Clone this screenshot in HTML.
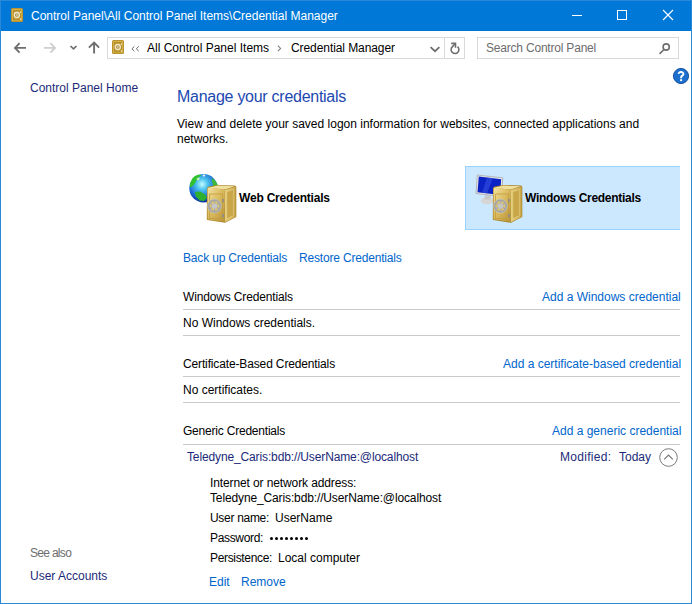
<!DOCTYPE html>
<html><head><meta charset="utf-8">
<style>
*{margin:0;padding:0;box-sizing:border-box}
html,body{width:692px;height:604px;overflow:hidden;background:#fff}
body{position:relative;font-family:"Liberation Sans",sans-serif;font-size:12px;color:#000}
.t{position:absolute;white-space:nowrap;line-height:15px}
.lnk{color:#0066cc}
.nav{color:#1b2a78}
svg{position:absolute;overflow:visible}
</style></head><body>
<!-- window border -->
<!-- title bar -->
<div style="position:absolute;left:0;top:0;width:692px;height:31px;background:#0078d7"></div>
<svg style="left:11px;top:8px" width="12" height="14" viewBox="0 0 12 14">
  <rect x="0" y="0" width="12" height="14" rx="1.5" fill="#b08a28"/>
  <rect x="0.8" y="0.8" width="10.4" height="12.4" rx="0.8" fill="#d6b246"/>
  <rect x="2.4" y="2.3" width="7.4" height="9.7" fill="#c29b33" stroke="#a8832a" stroke-width="0.6"/>
  <circle cx="5.8" cy="7" r="2.5" fill="#b39136" stroke="#efe8cf" stroke-width="1.3"/>
  <rect x="5.1" y="6.3" width="1.4" height="1.4" fill="#dddddd"/>
  <rect x="9.1" y="3.4" width="1" height="1.5" fill="#f2ecd8"/>
  <rect x="9.1" y="10.3" width="1" height="1.5" fill="#f2ecd8"/>
</svg>
<div class="t" style="left:31px;top:9px;color:#fff">Control Panel\All Control Panel Items\Credential Manager</div>
<!-- window controls -->
<div style="position:absolute;left:572px;top:15px;width:10px;height:1px;background:#fff"></div>
<div style="position:absolute;left:617px;top:10px;width:10px;height:10px;border:1px solid #fff"></div>
<svg style="left:663px;top:10px" width="10" height="10" viewBox="0 0 10 10"><path d="M0 0L10 10M10 0L0 10" stroke="#fff" stroke-width="1.1"/></svg>

<!-- nav buttons -->
<svg style="left:14px;top:42px" width="13" height="12" viewBox="0 0 13 12"><path d="M5.6 1.2L1 5.9L5.6 10.6M1 5.9H12" fill="none" stroke="#6e6e6e" stroke-width="1.9"/></svg>
<svg style="left:44px;top:42px" width="13" height="12" viewBox="0 0 13 12"><path d="M6.4 1.2L11 5.9L6.4 10.6M11 5.9H0" fill="none" stroke="#cfcfcf" stroke-width="1.9"/></svg>
<svg style="left:70px;top:45px" width="7" height="5" viewBox="0 0 7 5"><path d="M0.5 1L3.5 3.9L6.5 1" fill="none" stroke="#6e6e6e" stroke-width="1.7"/></svg>
<svg style="left:88px;top:41px" width="12" height="13" viewBox="0 0 12 13"><path d="M0.9 6.6L6.1 1.5L11.1 6.6M6.1 1.5V12.6" fill="none" stroke="#6e6e6e" stroke-width="1.9"/></svg>

<!-- address box -->
<div style="position:absolute;left:107px;top:37px;width:358px;height:22px;border:1px solid #d9d9d9"></div>
<div style="position:absolute;left:444px;top:38px;width:1px;height:20px;background:#d9d9d9"></div>
<svg style="left:112px;top:40px" width="12" height="14" viewBox="0 0 12 14">
  <rect x="0" y="0" width="12" height="14" rx="1.5" fill="#b08a28"/>
  <rect x="0.8" y="0.8" width="10.4" height="12.4" rx="0.8" fill="#d6b246"/>
  <rect x="2.4" y="2.3" width="7.4" height="9.7" fill="#c29b33" stroke="#a8832a" stroke-width="0.6"/>
  <circle cx="5.8" cy="7" r="2.5" fill="#b39136" stroke="#efe8cf" stroke-width="1.3"/>
  <rect x="5.1" y="6.3" width="1.4" height="1.4" fill="#dddddd"/>
  <rect x="9.1" y="3.4" width="1" height="1.5" fill="#f2ecd8"/>
  <rect x="9.1" y="10.3" width="1" height="1.5" fill="#f2ecd8"/>
</svg>
<svg style="left:131px;top:46px" width="9" height="6" viewBox="0 0 9 6"><path d="M3.4 0.4L0.9 2.8L3.4 5.2M7.8 0.4L5.3 2.8L7.8 5.2" fill="none" stroke="#666" stroke-width="1"/></svg>
<div class="t" style="left:147px;top:41px">All Control Panel Items</div>
<svg style="left:277px;top:45px" width="5" height="7" viewBox="0 0 5 7"><path d="M0.9 0.7L3.6 3.4L0.9 6.1" fill="none" stroke="#808080" stroke-width="1.1"/></svg>
<div class="t" style="left:291px;top:41px;letter-spacing:-0.08px">Credential Manager</div>
<svg style="left:430px;top:46px" width="10" height="6" viewBox="0 0 10 6"><path d="M0.6 1.2L5 5.2L9.4 1.2" fill="none" stroke="#6e6e6e" stroke-width="1.8"/></svg>
<svg style="left:448px;top:42px" width="14" height="14" viewBox="0 0 14 14"><path d="M9.5 4.6A3.9 3.9 0 1 1 4.24 4.84L7.2 1.8" fill="none" stroke="#6e6e6e" stroke-width="1.55"/><path d="M3.2 1.4H7.5V5.7" fill="none" stroke="#6e6e6e" stroke-width="1.6"/></svg>

<!-- search box -->
<div style="position:absolute;left:477px;top:37px;width:202px;height:22px;border:1px solid #d9d9d9"></div>
<div class="t" style="left:486px;top:41px;color:#6d6d6d;letter-spacing:-0.2px">Search Control Panel</div>
<svg style="left:659px;top:43px" width="12" height="12" viewBox="0 0 12 12"><circle cx="7.2" cy="4" r="3.1" fill="none" stroke="#6e6e6e" stroke-width="1.6"/><path d="M5.2 6.3L0.6 10.9" stroke="#6e6e6e" stroke-width="1.6"/></svg>

<!-- help -->
<svg style="left:673px;top:68px" width="16" height="16" viewBox="0 0 16 16"><circle cx="8" cy="8" r="7.6" fill="#1d6fce" stroke="#0d4a96" stroke-width="0.9"/><path d="M5.7 5.9C5.6 3.6 10.4 3.3 10.4 5.9C10.4 7.5 8.1 7.7 8.1 9.6V10.3" fill="none" stroke="#fff" stroke-width="1.9"/><rect x="7.1" y="11.2" width="2" height="1.9" fill="#fff"/></svg>

<!-- left nav -->
<div class="t nav" style="left:30px;top:81px">Control Panel Home</div>
<div class="t" style="left:30px;top:546px;color:#6d6d6d;letter-spacing:-0.7px">See also</div>
<div class="t nav" style="left:30px;top:569px">User Accounts</div>

<!-- main -->
<div class="t" style="left:177px;top:88px;font-size:16px;line-height:18px;letter-spacing:-0.27px;color:#1c48b0">Manage your credentials</div>
<div class="t" style="left:177px;top:117px">View and delete your saved logon information for websites, connected applications and</div>
<div class="t" style="left:177px;top:132px">networks.</div>

<!-- tiles -->
<div style="position:absolute;left:465px;top:166px;width:215px;height:64px;background:#cce8ff;border:1px solid #99d1ff;border-right:none"></div>

<!-- web cred icon -->
<svg style="left:186px;top:170px" width="52" height="56" viewBox="0 0 52 56">
  <defs>
    <radialGradient id="gl" cx="0.45" cy="0.36" r="0.66"><stop offset="0" stop-color="#c4faff"/><stop offset="0.3" stop-color="#4cc4f0"/><stop offset="0.72" stop-color="#1a66cf"/><stop offset="1" stop-color="#0a2a90"/></radialGradient>
    <linearGradient id="sf" x1="0" y1="0" x2="1" y2="1"><stop offset="0" stop-color="#f3e3a0"/><stop offset="0.45" stop-color="#dcbd62"/><stop offset="1" stop-color="#b89236"/></linearGradient>
    <linearGradient id="ss" x1="0" y1="0" x2="1" y2="0"><stop offset="0" stop-color="#e6cf80"/><stop offset="1" stop-color="#c9a64a"/></linearGradient>
  </defs>
  <circle cx="17.5" cy="18.2" r="14.2" fill="url(#gl)"/>
  <path d="M3.6 17.5L4.6 12L6.5 8.2L9 6L12 4.8L15.5 5L13 7L11 9L9.6 11.9L8 14.6L6 16.5Z" fill="#2fc22a"/>
  <path d="M10.5 8.5L13 7.2L14 9L11.5 11Z" fill="#e8f6a8" opacity="0.8"/>
  <ellipse cx="17.9" cy="5.4" rx="1.3" ry="1" fill="#e6f4f0"/>
  <path d="M8.9 22L14.3 21.5L19.7 25L20.9 28L17.9 31L13.7 30.4L10.1 26.8Z" fill="#30b030"/>
  <path d="M25.6 8.3L28.6 10.1L31.6 14.3L31 17.9L27.4 16.7L26.2 11.9Z" fill="#3cbb3a"/>
  
  <path d="M21 18.5Q21 17 23 16.4L31 15Q40 15 48.5 15.6Q50.3 15.8 50.3 17.2V47L39 52.8L21.5 50Q20.8 49.8 20.8 49Z" fill="#a98427"/>
  <path d="M21.6 18.8Q21.6 17.8 23 17.6L38.8 19.8V52L21.6 49.2Z" fill="url(#sf)"/>
  <path d="M39 20L49.6 16.5V47L39 52Z" fill="url(#ss)"/>
  <path d="M22.2 17.8L31.5 15.6L48.8 16.2L38.8 19.6Z" fill="#f0e0a0"/>
  <path d="M40.8 21.8L47.4 19.4V45.6L40.8 48.8Z" fill="#c9a648" stroke="#e9d68f" stroke-width="0.5"/>
  <rect x="23.6" y="24" width="13" height="24.6" fill="none" stroke="#c29c3e" stroke-width="0.8"/>
  <rect x="36.2" y="29" width="1.7" height="3.2" fill="#8e8e8e"/>
  <rect x="36.2" y="44" width="1.7" height="3.4" fill="#8e8e8e"/>
  <circle cx="28.5" cy="36.1" r="6" fill="#d9c377" stroke="#a4a4a4" stroke-width="2"/>
  <circle cx="28.5" cy="36.1" r="6.9" fill="none" stroke="#e8e8e8" stroke-width="0.5" opacity="0.6"/>
  <path d="M28.5 30.6V41.6M23.7 33.3L33.3 38.9M23.7 38.9L33.3 33.3" stroke="#a9a9a9" stroke-width="1.3"/>
  <circle cx="28.5" cy="36.1" r="2.7" fill="#c6c6c6"/>
</svg>
<div class="t" style="left:239px;top:191px;font-weight:bold;letter-spacing:-0.2px">Web Credentials</div>

<!-- windows cred icon -->
<svg style="left:472px;top:170px" width="52" height="56" viewBox="0 0 52 56">
  <ellipse cx="15.2" cy="30.8" rx="6.5" ry="3.6" fill="#d6d6d6"/>
  <path d="M13 25L19 26L18 29.5H12.5Z" fill="#c8c8c8"/>
  <path d="M5.3 5L30.8 7.9L29.5 26.5L4 23.5Z" fill="#e6e6e6" stroke="#a2a2a2" stroke-width="0.7"/>
  <path d="M6.8 6.6L29.2 9.2L28 25L5.5 22.2Z" fill="#0b22c4"/>
  <path d="M15 7.5L21 8.2L15 23.3L10 22.7Z" fill="#3550e0" opacity="0.6"/>
  <path d="M21 18.5Q21 17 23 16.4L31 15Q40 15 48.5 15.6Q50.3 15.8 50.3 17.2V47L39 52.8L21.5 50Q20.8 49.8 20.8 49Z" fill="#a98427"/>
  <path d="M21.6 18.8Q21.6 17.8 23 17.6L38.8 19.8V52L21.6 49.2Z" fill="url(#sf)"/>
  <path d="M39 20L49.6 16.5V47L39 52Z" fill="url(#ss)"/>
  <path d="M22.2 17.8L31.5 15.6L48.8 16.2L38.8 19.6Z" fill="#f0e0a0"/>
  <path d="M40.8 21.8L47.4 19.4V45.6L40.8 48.8Z" fill="#c9a648" stroke="#e9d68f" stroke-width="0.5"/>
  <rect x="23.6" y="24" width="13" height="24.6" fill="none" stroke="#c29c3e" stroke-width="0.8"/>
  <rect x="36.2" y="29" width="1.7" height="3.2" fill="#8e8e8e"/>
  <rect x="36.2" y="44" width="1.7" height="3.4" fill="#8e8e8e"/>
  <circle cx="28.5" cy="36.1" r="6" fill="#d9c377" stroke="#a4a4a4" stroke-width="2"/>
  <circle cx="28.5" cy="36.1" r="6.9" fill="none" stroke="#e8e8e8" stroke-width="0.5" opacity="0.6"/>
  <path d="M28.5 30.6V41.6M23.7 33.3L33.3 38.9M23.7 38.9L33.3 33.3" stroke="#a9a9a9" stroke-width="1.3"/>
  <circle cx="28.5" cy="36.1" r="2.7" fill="#c6c6c6"/>
</svg>
<div class="t" style="left:525px;top:191px;font-weight:bold;letter-spacing:-0.28px">Windows Credentials</div>

<div class="t lnk" style="left:183px;top:251px;letter-spacing:-0.17px">Back up Credentials</div>
<div class="t lnk" style="left:299px;top:251px;letter-spacing:-0.18px">Restore Credentials</div>

<!-- windows credentials section -->
<div class="t" style="left:183px;top:290px;letter-spacing:-0.15px">Windows Credentials</div>
<div class="t lnk" style="left:542px;top:290px">Add a Windows credential</div>
<div style="position:absolute;left:183px;top:309px;width:497px;height:1px;background:#cacaca"></div>
<div class="t" style="left:183px;top:316px">No Windows credentials.</div>
<div style="position:absolute;left:183px;top:335px;width:497px;height:1px;background:#cacaca"></div>

<div class="t" style="left:183px;top:357px;letter-spacing:-0.14px">Certificate-Based Credentials</div>
<div class="t lnk" style="left:503px;top:357px">Add a certificate-based credential</div>
<div style="position:absolute;left:183px;top:376px;width:497px;height:1px;background:#cacaca"></div>
<div class="t" style="left:183px;top:383px">No certificates.</div>
<div style="position:absolute;left:183px;top:402px;width:497px;height:1px;background:#cacaca"></div>

<div class="t" style="left:183px;top:424px;letter-spacing:-0.21px">Generic Credentials</div>
<div class="t lnk" style="left:552px;top:424px">Add a generic credential</div>
<div style="position:absolute;left:183px;top:444px;width:497px;height:1px;background:#cacaca"></div>

<div class="t nav" style="left:187px;top:450px;letter-spacing:-0.13px">Teledyne_Caris:bdb://UserName:@localhost</div>
<div class="t nav" style="left:560px;top:450px;letter-spacing:0.3px">Modified:</div>
<div class="t nav" style="left:619px;top:450px">Today</div>
<svg style="left:659px;top:448px" width="19" height="19" viewBox="0 0 19 19"><circle cx="9.5" cy="9.5" r="8.8" fill="none" stroke="#7a7a7a" stroke-width="1"/><path d="M5.2 11.4L9.5 7L13.8 11.4" fill="none" stroke="#777" stroke-width="1.15"/></svg>

<div class="t" style="left:210px;top:476px;letter-spacing:-0.11px">Internet or network address:</div>
<div class="t" style="left:210px;top:491px;letter-spacing:-0.13px">Teledyne_Caris:bdb://UserName:@localhost</div>
<div class="t" style="left:210px;top:511px;letter-spacing:-0.3px">User name:</div>
<div class="t" style="left:275px;top:511px">UserName</div>
<div class="t" style="left:210px;top:531px;letter-spacing:-0.33px">Password:</div>
<svg style="left:270px;top:537px" width="40" height="4" viewBox="0 0 40 4"><g fill="#000"><circle cx="1.5" cy="1.5" r="1.5"/><circle cx="6.5" cy="1.5" r="1.5"/><circle cx="11.5" cy="1.5" r="1.5"/><circle cx="16.5" cy="1.5" r="1.5"/><circle cx="21.5" cy="1.5" r="1.5"/><circle cx="26.5" cy="1.5" r="1.5"/><circle cx="31.5" cy="1.5" r="1.5"/><circle cx="36.5" cy="1.5" r="1.5"/></g></svg>
<div class="t" style="left:210px;top:551px;letter-spacing:-0.33px">Persistence:</div>
<div class="t" style="left:278px;top:551px">Local computer</div>
<div class="t lnk" style="left:209px;top:575px">Edit</div>
<div class="t lnk" style="left:241px;top:575px">Remove</div>
<div style="position:absolute;left:0;top:0;width:692px;height:604px;border:1px solid #2a88d8;pointer-events:none"></div>
</body></html>
